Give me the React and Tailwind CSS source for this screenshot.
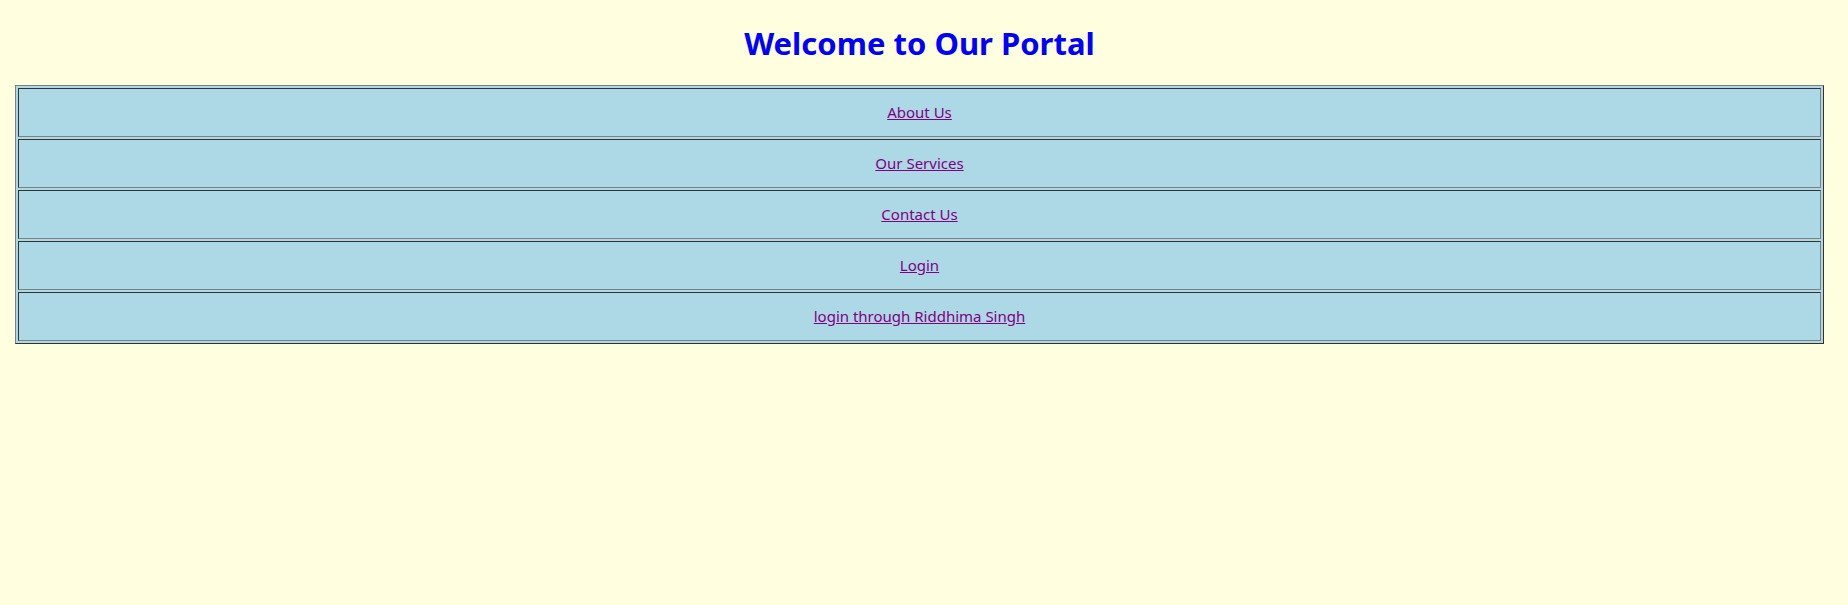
import React from 'react';

const links = ['About Us', 'Our Services', 'Contact Us', 'Login', 'login through Riddhima Singh'];

export default function App() {
  return (
    <div className="min-h-screen bg-[#ffffe0] pl-[15px] pr-[24px] font-['Segoe_UI','Noto_Sans',sans-serif]">
      <h1 className="pt-[15px] pb-[14px] text-center text-[31px] font-bold leading-[56px] text-[#0000ff]">
        Welcome to Our Portal
      </h1>
      <table className="w-full border-separate border-spacing-[2px] border border-t-[#808080] border-l-[#808080] border-b-[#333333] border-r-[#333333] bg-[#add8e6]">
        <tbody>
          {links.map((label) => (
            <tr key={label}>
              <td className="h-[49px] border border-t-[#333333] border-l-[#333333] border-b-[#808080] border-r-[#808080] p-0 text-center align-middle text-[15px]">
                <a href="#" className="text-[#800080] underline">
                  {label}
                </a>
              </td>
            </tr>
          ))}
        </tbody>
      </table>
    </div>
  );
}
